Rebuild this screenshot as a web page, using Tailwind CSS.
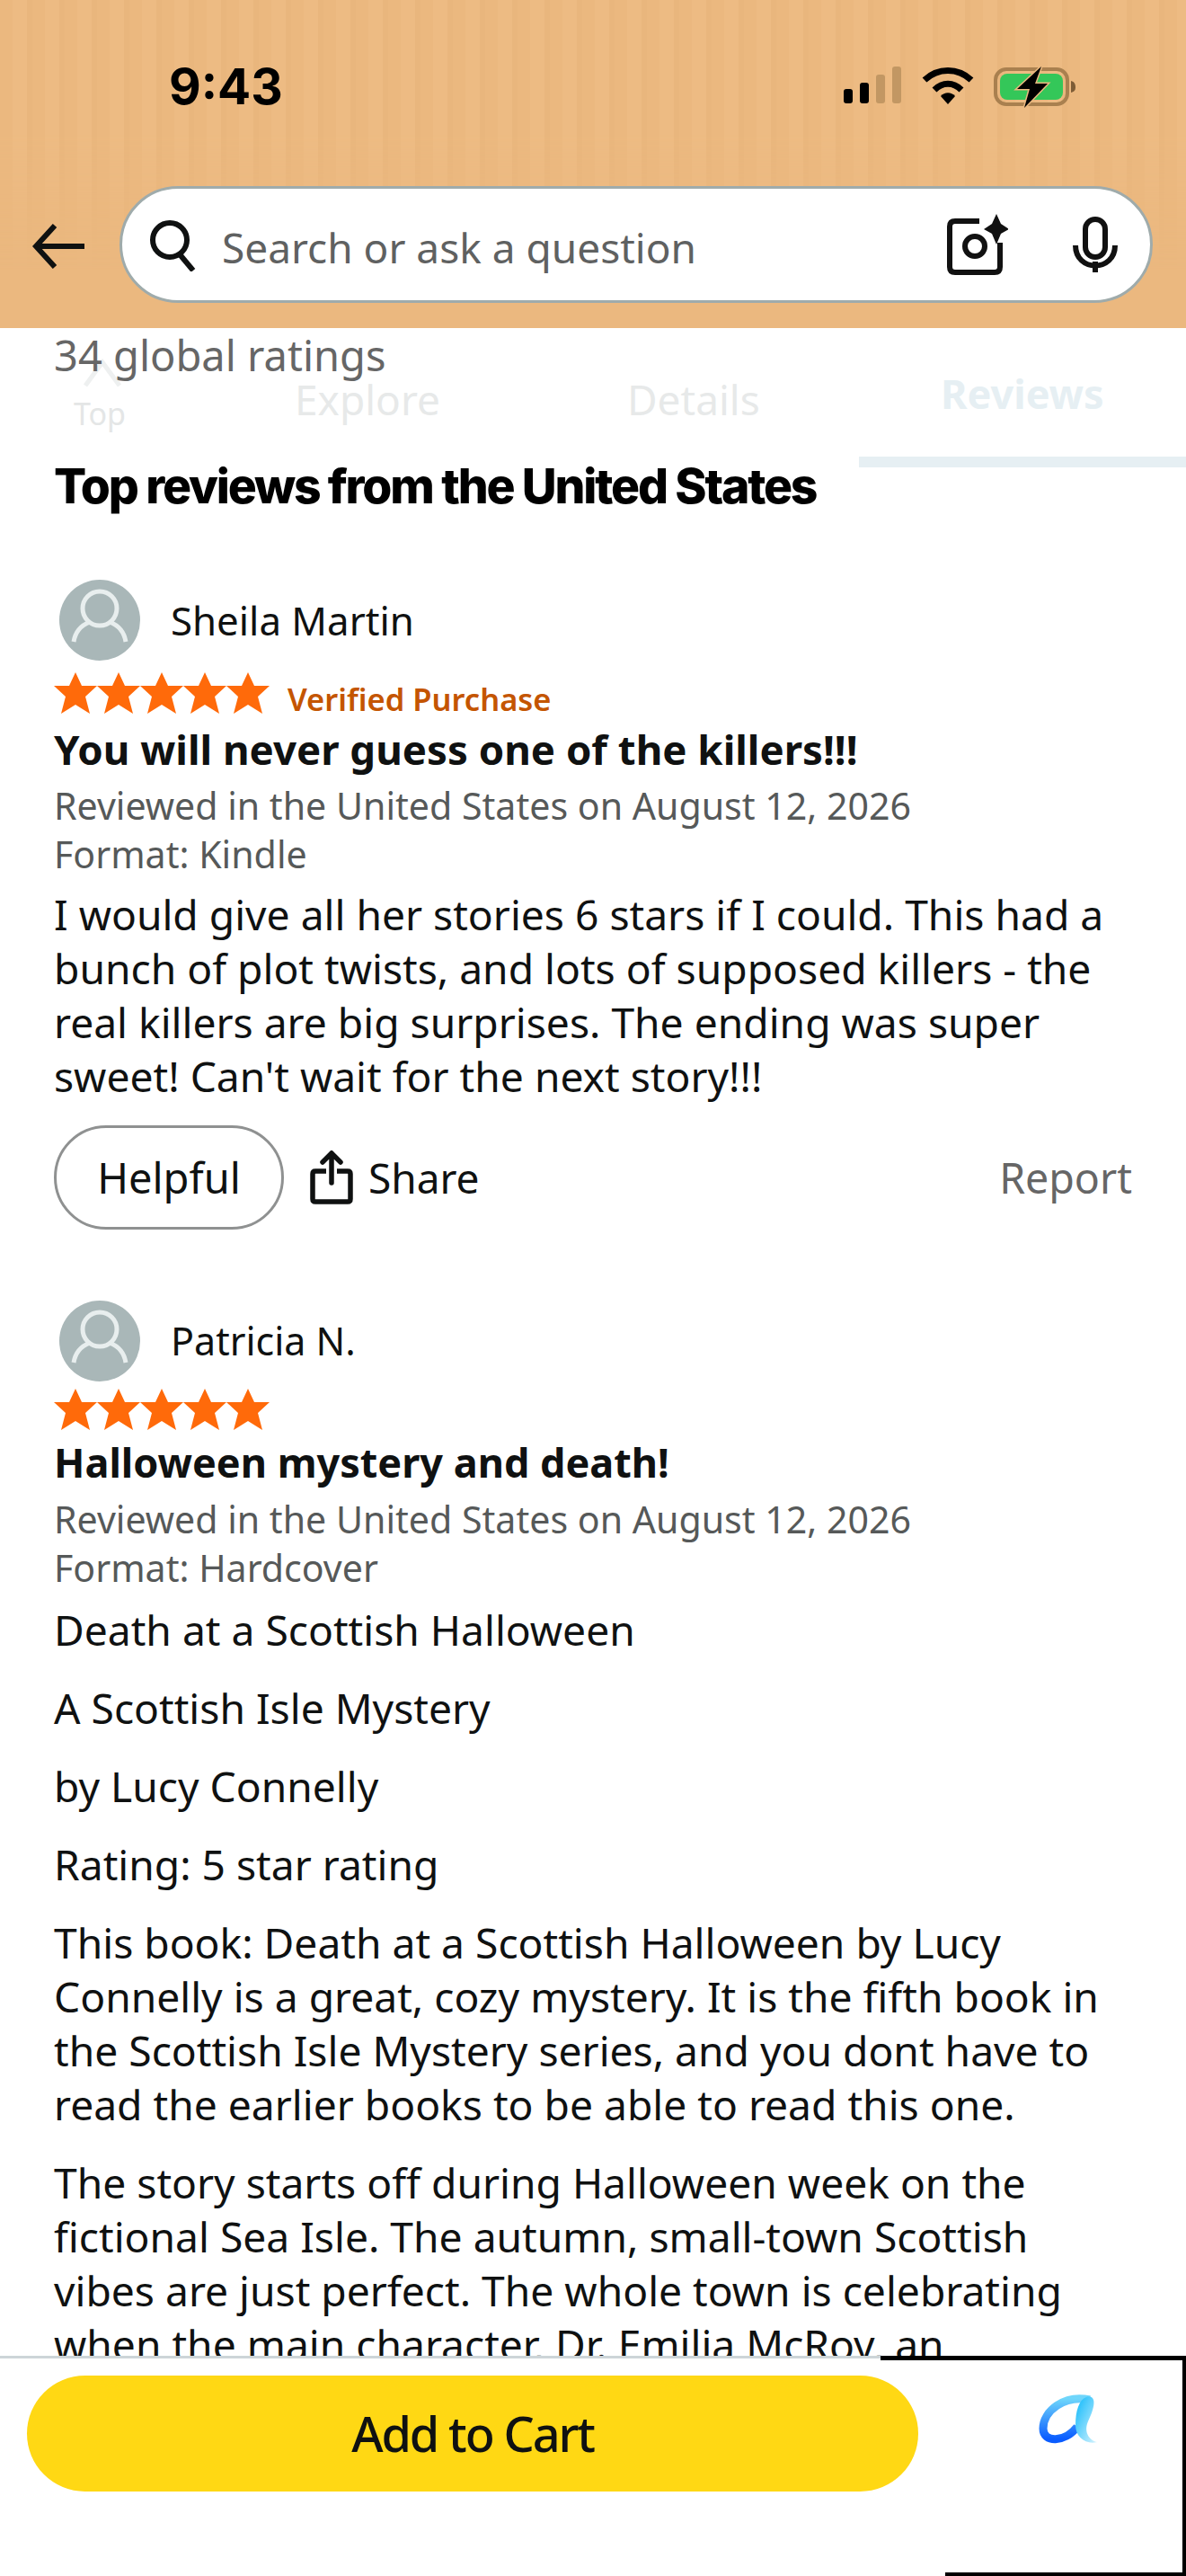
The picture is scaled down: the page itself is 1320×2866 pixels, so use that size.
<!DOCTYPE html>
<html lang="en">
<head>
  <meta charset="UTF-8" />
  <title>Reviews</title>
  <script src="https://cdn.jsdelivr.net/npm/@tailwindcss/browser@4"></script>
</head>
<body class="bg-white">
<div class="relative w-[1320px] h-[2866px] overflow-hidden bg-white font-['Noto_Sans',sans-serif] text-[#0f1111]">

  <!-- header -->
  <header class="relative z-20 h-[365px] bg-[#ebb87f]">
    <div class="absolute inset-x-0 top-0 h-[300px] bg-[repeating-linear-gradient(90deg,#ebb87f_0,#ebb87f_14px,#edbb83_14px,#edbb83_30px,#e9b67d_30px,#e9b67d_36px)] [mask-image:linear-gradient(180deg,black_50%,transparent)]"></div>
    <div class="relative flex h-[207px] items-start pl-[188px] pr-[120px] pt-[67px]">
      <span class="font-['Inter',sans-serif] text-[55px] leading-[58px] font-bold text-black">9:43</span>
      <div class="ml-auto flex items-start pt-[7px]">
        <svg class="w-[66px] h-[42px]" viewBox="0 0 66 42">
          <rect x="1" y="25" width="10" height="16" rx="3" fill="#000"/>
          <rect x="19" y="18" width="10" height="23" rx="3" fill="#000"/>
          <rect x="37" y="9" width="10" height="32" rx="3" fill="#c29763"/>
          <rect x="55" y="0" width="10" height="41" rx="3" fill="#c29763"/>
        </svg>
        <svg class="ml-[22px] w-[58px] h-[44px]" viewBox="0 0 58 44">
          <path d="M3 15C18 1 40 1 55 15" fill="none" stroke="#000" stroke-width="7"/>
          <path d="M14 26C23 17 35 17 44 26" fill="none" stroke="#000" stroke-width="7"/>
          <path d="M21 33C25 28 33 28 37 33L29 42Z" fill="#000"/>
        </svg>
        <svg class="ml-[22px] w-[94px] h-[46px]" viewBox="0 0 94 46">
          <rect x="2" y="3" width="80" height="39" rx="12" fill="none" stroke="#a9804f" stroke-width="4"/>
          <rect x="7" y="8" width="70" height="29" rx="8" fill="#34c759"/>
          <path d="M86 16C90 17 91 20 91 23C91 26 90 28 86 29Z" fill="#7d5c36"/>
          <path d="M53 0L26 25H40L34 46L60 19H46Z" fill="#000" stroke="#ebb87f" stroke-width="3" paint-order="stroke"/>
        </svg>
      </div>
    </div>
    <div class="relative flex items-center">
      <svg class="ml-[36px] mt-[4px] w-[60px] h-[50px]" viewBox="0 0 60 50" fill="none" stroke="#0f1111" stroke-width="6">
        <path d="M58 25H4M25 2L4 25L25 48"/>
      </svg>
      <div class="ml-[37px] flex h-[130px] w-[1150px] items-center rounded-[65px] border-[3px] border-[#9fabab] bg-white pl-[29px]">
        <svg class="w-[54px] h-[60px] shrink-0" viewBox="0 0 54 60" fill="none" stroke="#0f1111" stroke-width="6">
          <circle cx="24" cy="25" r="19"/>
          <path d="M35 41L50 59"/>
        </svg>
        <span class="ml-[28px] mt-[5px] text-[46px] leading-[60px] text-[#5f6161]">Search or ask a question</span>
        <svg class="ml-auto w-[68px] h-[68px] shrink-0" viewBox="0 0 68 68" fill="none" stroke="#111" stroke-width="6">
          <path d="M36 8H9Q3 8 3 14V59Q3 65 9 65H53Q59 65 59 59V32"/>
          <circle cx="31" cy="36" r="11"/>
          <path d="M55 0L60 11L69 17L60 22L55 34L50 22L41 17L50 11Z" fill="#111" stroke="none"/>
        </svg>
        <svg class="ml-[72px] mr-[36px] w-[50px] h-[62px] shrink-0" viewBox="0 0 50 62" fill="none" stroke="#111" stroke-width="6">
          <rect x="14" y="3" width="22" height="42" rx="11"/>
          <path d="M3 32C3 62 47 62 47 32"/>
          <path d="M25 50V62"/>
        </svg>
      </div>
    </div>
  </header>

  <!-- faded sticky tabs lying over the page -->
  <div class="absolute left-0 right-0 top-[365px] h-[155px] bg-white">
    <svg class="absolute left-[92px] top-[33px] w-[44px] h-[34px]" viewBox="0 0 44 34" fill="none" stroke="#eef0f0" stroke-width="5">
      <path d="M3 31L22 5L41 31"/>
    </svg>
    <span class="absolute left-[82px] top-[72px] text-[34px] leading-[46px] text-[#e4e6e6]">Top</span>
    <span class="absolute left-[328px] top-[49px] text-[46px] leading-[60px] text-[#e7e9e9]">Explore</span>
    <span class="absolute left-[698px] top-[49px] text-[46px] leading-[60px] text-[#e7e9e9]">Details</span>
    <span class="absolute left-[1047px] top-[43px] text-[45px] leading-[60px] font-bold text-[#e6eff3]">Reviews</span>
    <div class="absolute bottom-0 right-0 h-[12px] w-[364px] bg-[#e6eff3]"></div>
  </div>

  <!-- page content -->
  <main class="relative px-[60px]">
    <p class="h-[60px] text-[47px] leading-[60px] text-[#666]">34 global ratings</p>
    <h2 class="mt-[83px] text-[53.5px] leading-[66px] font-extrabold tracking-[-2.2px] text-black font-['Inter',sans-serif]">Top reviews from the United States</h2>

    <article class="mt-[71px]">
      <div class="flex items-center pl-[6px]">
        <svg class="w-[90px] h-[90px]" viewBox="0 0 90 90" fill="none">
          <circle cx="45" cy="45" r="45" fill="#a9b7b8"/>
          <circle cx="45" cy="32" r="19" stroke="#e8eeee" stroke-width="5"/>
          <path d="M16 69C18 57 26 50 34 47M74 69C72 57 64 50 56 47" stroke="#e8eeee" stroke-width="5"/>
        </svg>
        <span class="ml-[34px] text-[43.8px] leading-[60px]">Sheila Martin</span>
      </div>
      <div class="mt-[13px] flex h-[46px] items-center">
        <svg class="w-[240px] h-[46px]" viewBox="0 0 240 46" fill="#ff6a0a">
          <path d="M24 0L31 15H48L35 27L40 46L24 36L8 46L13 27L0 15H17Z"/>
          <path d="M72 0L79 15H96L83 27L88 46L72 36L56 46L61 27L48 15H65Z"/>
          <path d="M120 0L127 15H144L131 27L136 46L120 36L104 46L109 27L96 15H113Z"/>
          <path d="M168 0L175 15H192L179 27L184 46L168 36L152 46L157 27L144 15H161Z"/>
          <path d="M216 0L223 15H240L227 27L232 46L216 36L200 46L205 27L192 15H209Z"/>
        </svg>
        <span class="ml-[20px] mt-[13px] text-[34.5px] leading-[46px] font-semibold text-[#c45500]">Verified Purchase</span>
      </div>
      <h3 class="mt-[9px] text-[45.6px] leading-[60px] font-bold">You will never guess one of the killers!!!</h3>
      <p class="mt-[6px] text-[41.1px] leading-[54px] text-[#565959]">Reviewed in the United States on August 12, 2026</p>
      <p class="text-[41.1px] leading-[54px] text-[#565959]">Format: Kindle</p>
      <div class="mt-[11px] text-[46.2px] leading-[60px]">
        <p>I would give all her stories 6 stars if I could. This had a<br>bunch of plot twists, and lots of supposed killers - the<br>real killers are big surprises. The ending was super<br>sweet! Can't wait for the next story!!!</p>
      </div>
      <div class="mt-[24px] flex items-center">
        <button class="h-[116px] w-[256px] rounded-[58px] border-[3px] border-[#8f9191] text-[47px]">Helpful</button>
        <svg class="ml-[29px] w-[48px] h-[60px]" viewBox="0 0 48 60" fill="none" stroke="#0f1111" stroke-width="5.5" stroke-linecap="round">
          <path d="M24 36V3M14 13L24 3L34 13"/>
          <path d="M18 23H6Q3 23 3 26V54Q3 57 6 57H42Q45 57 45 54V26Q45 23 42 23H30" stroke-linecap="butt"/>
        </svg>
        <span class="ml-[17px] text-[46px] leading-[60px]">Share</span>
        <span class="ml-auto text-[46.5px] leading-[60px] text-[#666]">Report</span>
      </div>
    </article>

    <article class="mt-[79px]">
      <div class="flex items-center pl-[6px]">
        <svg class="w-[90px] h-[90px]" viewBox="0 0 90 90" fill="none">
          <circle cx="45" cy="45" r="45" fill="#a9b7b8"/>
          <circle cx="45" cy="32" r="19" stroke="#e8eeee" stroke-width="5"/>
          <path d="M16 69C18 57 26 50 34 47M74 69C72 57 64 50 56 47" stroke="#e8eeee" stroke-width="5"/>
        </svg>
        <span class="ml-[34px] text-[43px] leading-[60px]">Patricia N.</span>
      </div>
      <div class="mt-[8px] flex h-[46px] items-center">
        <svg class="w-[240px] h-[46px]" viewBox="0 0 240 46" fill="#ff6a0a">
          <path d="M24 0L31 15H48L35 27L40 46L24 36L8 46L13 27L0 15H17Z"/>
          <path d="M72 0L79 15H96L83 27L88 46L72 36L56 46L61 27L48 15H65Z"/>
          <path d="M120 0L127 15H144L131 27L136 46L120 36L104 46L109 27L96 15H113Z"/>
          <path d="M168 0L175 15H192L179 27L184 46L168 36L152 46L157 27L144 15H161Z"/>
          <path d="M216 0L223 15H240L227 27L232 46L216 36L200 46L205 27L192 15H209Z"/>
        </svg>
      </div>
      <h3 class="mt-[6px] text-[45px] leading-[60px] font-bold">Halloween mystery and death!</h3>
      <p class="mt-[6px] text-[41.1px] leading-[54px] text-[#565959]">Reviewed in the United States on August 12, 2026</p>
      <p class="text-[41.1px] leading-[54px] text-[#565959]">Format: Hardcover</p>
      <div class="mt-[13px] flex flex-col gap-[27px] text-[46.2px] leading-[60px]">
        <p>Death at a Scottish Halloween</p>
        <p>A Scottish Isle Mystery</p>
        <p>by Lucy Connelly</p>
        <p>Rating: 5 star rating</p>
        <p>This book: Death at a Scottish Halloween by Lucy<br>Connelly is a great, cozy mystery. It is the fifth book in<br>the Scottish Isle Mystery series, and you dont have to<br>read the earlier books to be able to read this one.</p>
        <p>The story starts off during Halloween week on the<br>fictional Sea Isle. The autumn, small-town Scottish<br>vibes are just perfect. The whole town is celebrating<br>when the main character, Dr. Emilia McRoy, an</p>
      </div>
    </article>
  </main>

  <!-- bottom bar -->
  <div class="absolute inset-x-0 bottom-0 z-30 h-[245px] border-t-[3px] border-[#cdd5d8] bg-white">
    <div class="absolute right-0 top-[-3px] h-[5px] w-[340px] bg-black"></div>
    <div class="absolute right-0 top-0 h-full w-[4px] bg-black"></div>
    <div class="absolute bottom-0 right-0 h-[4px] w-[268px] bg-black"></div>
    <div class="ml-[30px] mt-[19px] flex h-[129px] w-[992px] items-center justify-center rounded-[65px] bg-[#ffd814] text-[54px] font-medium tracking-[-2.1px]">Add to Cart</div>
    <svg class="absolute left-[1155px] top-[40px] w-[72px] h-[56px]" viewBox="0 0 72 56" fill="none">
      <defs>
        <linearGradient id="loop" x1="0" y1="0" x2="0" y2="1"><stop offset="0" stop-color="#6fd6fb"/><stop offset="1" stop-color="#0a5cff"/></linearGradient>
        <linearGradient id="tail" x1="0" y1="0" x2="1" y2="1"><stop offset="0" stop-color="#0bb8fb"/><stop offset="1" stop-color="#d8f4fe"/></linearGradient>
      </defs>
      <path d="M58 6C30 0 6 18 6 38C6 54 30 54 44 36" stroke="url(#loop)" stroke-width="9"/>
      <path d="M54 3C66 0 64 14 56 30C50 44 60 52 66 53C54 56 42 48 42 34C42 18 46 6 54 3Z" fill="url(#tail)"/>
    </svg>
  </div>
</div>
</body>
</html>
